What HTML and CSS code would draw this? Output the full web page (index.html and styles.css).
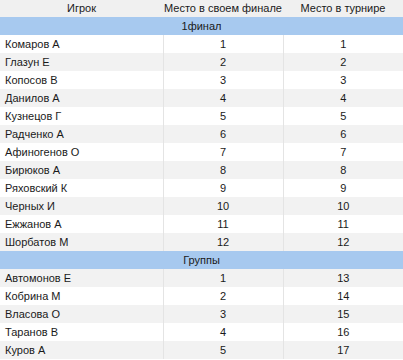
FILE: index.html
```html
<!DOCTYPE html>
<html lang="ru">
<head>
<meta charset="utf-8">
<link rel="stylesheet" href="styles.css">
</head>
<body>
<table class="results">
  <colgroup><col class="c1"><col class="c2"><col class="c3"></colgroup>
  <thead>
    <tr class="head"><th>Игрок</th><th>Место в своем финале</th><th>Место в турнире</th></tr>
  </thead>
  <tbody>
    <tr class="section"><td colspan="3">1финал</td></tr>
    <tr class="w"><td>Комаров А</td><td>1</td><td>1</td></tr>
    <tr class="g"><td>Глазун Е</td><td>2</td><td>2</td></tr>
    <tr class="w"><td>Копосов В</td><td>3</td><td>3</td></tr>
    <tr class="g"><td>Данилов А</td><td>4</td><td>4</td></tr>
    <tr class="w"><td>Кузнецов Г</td><td>5</td><td>5</td></tr>
    <tr class="g"><td>Радченко А</td><td>6</td><td>6</td></tr>
    <tr class="w"><td>Афиногенов О</td><td>7</td><td>7</td></tr>
    <tr class="g"><td>Бирюков А</td><td>8</td><td>8</td></tr>
    <tr class="w"><td>Ряховский К</td><td>9</td><td>9</td></tr>
    <tr class="g"><td>Черных И</td><td>10</td><td>10</td></tr>
    <tr class="w"><td>Ежжанов А</td><td>11</td><td>11</td></tr>
    <tr class="g"><td>Шорбатов М</td><td>12</td><td>12</td></tr>
    <tr class="section"><td colspan="3">Группы</td></tr>
    <tr class="g"><td>Автомонов Е</td><td>1</td><td>13</td></tr>
    <tr class="w"><td>Кобрина М</td><td>2</td><td>14</td></tr>
    <tr class="g"><td>Власова О</td><td>3</td><td>15</td></tr>
    <tr class="w"><td>Таранов В</td><td>4</td><td>16</td></tr>
    <tr class="g"><td>Куров А</td><td>5</td><td>17</td></tr>
  </tbody>
</table>
</body>
</html>
```
FILE: styles.css
```css
html, body {
  margin: 0;
  padding: 0;
  background: #ffffff;
}
.results {
  width: 403px;
  border-collapse: collapse;
  table-layout: fixed;
  font-family: "Liberation Sans", Arial, sans-serif;
  font-size: 11px;
  color: #1a1a1a;
  white-space: nowrap;
}
.c1 { width: 163px; }
.c2 { width: 120px; }
.c3 { width: 120px; }
.results th {
  height: 17px;
  padding: 0;
  font-weight: normal;
  text-align: center;
  background: #f0f0f0;
  line-height: 17px;
}
.results td {
  height: 18px;
  padding: 0;
  line-height: 18px;
  text-align: center;
  border-left: 1px solid #e4e4e4;
}
.results td:first-child {
  text-align: left;
  padding-left: 5px;
  border-left: none;
}
.results .section td {
  background: #a7c9ef;
  text-align: center;
  padding-left: 0;
}
.w td { background: #ffffff; }
.g td { background: #f2f2f2; }
```
